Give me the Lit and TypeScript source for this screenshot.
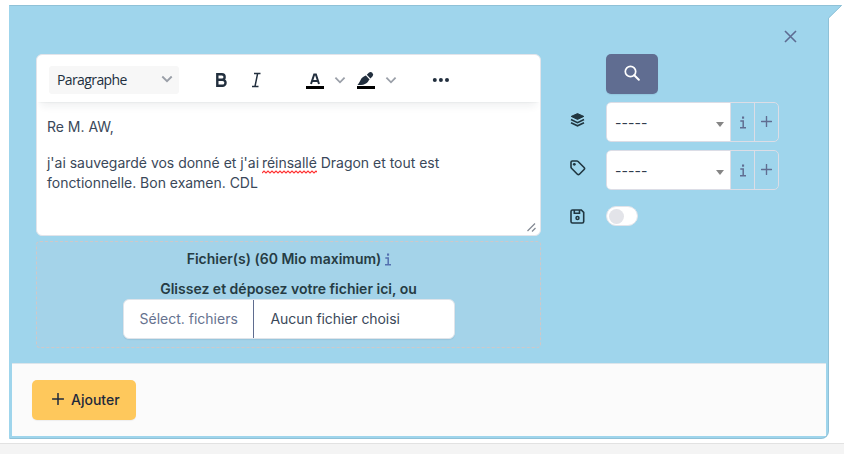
import { LitElement, html, css } from "lit";
import { customElement } from "lit/decorators.js";

const chevron = html`<svg width="12" height="8" viewBox="0 0 12 8"><path d="M1.300 1.500 6 6.200l4.700-4.700" fill="none" stroke="#9a9fa8" stroke-width="1.900"/></svg>`;
const infoIcon = html`<svg class="info" width="8" height="13" viewBox="0 0 8 13"><path d="M1.300 5h2.900v6.500M1 11.700h6" fill="none" stroke="currentColor" stroke-width="1.500"/><rect x="3" y="0.500" width="2.100" height="2.200" fill="currentColor"/></svg>`;
const plusIcon = (size: number) => html`<svg width=${size} height=${size} viewBox="0 0 12 12"><path d="M6 .5v11M.5 6h11" fill="none" stroke="currentColor" stroke-width="1.500" stroke-linecap="round"/></svg>`;

@customElement("app-root")
export class AppRoot extends LitElement {
  static styles = css`
    :host {
      display: flex;
      flex-direction: column;
      box-sizing: border-box;
      height: 454px;
      overflow: hidden;
      padding-top: 5px;
      background: #fff;
      font: 14px/20px Inter, sans-serif;
      color: #3a4859;
    }
    * { box-sizing: border-box; }
    svg { display: block; flex: none; }
    .card {
      position: relative;
      width: 820px;
      height: 434px;
      margin-left: 9px;
      background: #9fd5ec;
      border: 1px solid #8fc1d7;
      border-left-color: #9fd5ec;
      border-radius: 0 0 8px 0;
      display: flex;
      flex-direction: column;
      padding: 0 2px 2px;
    }
    .tail { position: absolute; left: 817px; top: -1px; }
    .close { position: absolute; left: 774px; top: 24px; }
    .body { height: 357px; display: flex; padding: 48px 0 0 24px; }
    .left { width: 505px; }
    .editor {
      position: relative;
      height: 182px;
      background: #fff;
      border: 1px solid #e2e4ea;
      border-radius: 6px;
      overflow: hidden;
    }
    .toolbar {
      height: 47px;
      display: flex;
      align-items: center;
      padding: 2px 12px 0;
      box-shadow: 0 2px 2px -2px rgba(34,47,62,.1), 0 8px 8px -4px rgba(34,47,62,.07);
    }
    .format {
      width: 130px;
      height: 28px;
      background: #f7f7f7;
      border-radius: 3px;
      display: flex;
      align-items: center;
      justify-content: space-between;
      padding: 0 6px 0 8px;
      font: 14px/18px "Open Sans", sans-serif;
      letter-spacing: -.6px;
      color: #222f3e;
    }
    .format span { padding-top: 1px; }
    .format svg { margin-bottom: 2px; }
    .content { padding: 15px 10px; letter-spacing: -.02px; }
    p { margin: 0 0 16px; }
    .typo { position: relative; display: inline-block; margin-left: -1px; }
    .wave { position: absolute; left: 0; top: 17px; }
    .grip { position: absolute; right: 4px; bottom: 3px; }
    .drop {
      height: 107px;
      margin-top: 5px;
      border: 1px dashed #d0c8c8;
      border-radius: 4px;
      background: #a4d3e9;
      display: flex;
      flex-direction: column;
      align-items: center;
      color: #263c44;
      font-weight: 600;
    }
    .line { display: flex; align-items: center; height: 20px; margin-top: 7px; }
    .line:first-child { padding-left: 2px; }
    .line + .line { margin-top: 10px; }
    .line .info { margin-left: 3px; color: #5470b0; }
    .file {
      width: 332px;
      height: 40px;
      display: flex;
      align-items: center;
      background: #fff;
      border: 1px solid #dfe4ea;
      border-radius: 6px;
      font-weight: 400;
      color: #3a4859;
      box-shadow: 0 1px 1px rgba(30,41,59,.08);
    }
    .pick { width: 130px; height: 38px; line-height: 38px; padding-left: 16px; border-right: 1px solid #5f6c8f; color: #66728f; }
    .none { padding-left: 17px; letter-spacing: -.08px; }
    .right {
      margin-left: 29px;
      display: grid;
      grid-template-columns: 36px auto;
      grid-template-rows: 40px 40px 40px 20px;
      row-gap: 8px;
      align-items: center;
      align-content: start;
    }
    .glyph { margin-bottom: 5px; }
    .save { margin: 16px 0 0; }
    .search {
      width: 52px;
      height: 40px;
      border-radius: 5px;
      background: #606d91;
      display: flex;
      padding: 11px 0 0 18px;
      box-shadow: 0 1px 1px rgba(30,41,59,.08);
    }
    .group { width: 173px; height: 40px; border: 1px solid #dcdde6; border-radius: 5px; display: flex; overflow: hidden; color: #606d91; }
    .select { width: 123px; background: #fff; display: flex; align-items: center; justify-content: space-between; padding: 0 6px 0 8px; color: #303c4d; }
    .dashes { margin-top: 1px; letter-spacing: .05px; }
    .caret { border: 4px solid transparent; border-top: 5px solid #858585; border-bottom: 0; margin-top: 4px; }
    .addon { width: 24px; border-left: 1px solid #dcdde6; display: flex; align-items: center; justify-content: center; }
    .addon:last-child { padding-bottom: 2px; }
    .toggle { width: 32px; height: 20px; margin-top: 16px; border-radius: 10px; background: #fff; border: 1px solid #e2e4ea; padding: 1.500px 2px; }
    .knob { width: 15px; height: 15px; border-radius: 50%; background: #e3e4e9; }
    .footer { flex: 1; background: #fbfbfb; border-top: 1px solid #dce5eb; padding: 16px 20px; }
    .add {
      width: 104px;
      height: 40px;
      background: #fec85c;
      border-radius: 5px;
      display: flex;
      align-items: center;
      padding-left: 20px;
      gap: 7px;
      font-weight: 500;
      color: #1e293b;
      box-shadow: 0 1px 1px rgba(30,41,59,.06);
    }
    .add svg { margin-bottom: 2px; }
    .page { height: 11px; margin-top: 4px; border-top: 1px solid #e2e2e2; background: #f4f4f4; }
  `;

  private group() {
    return html`<div class="group">
      <div class="select"><span class="dashes">-----</span><span class="caret"></span></div>
      <div class="addon">${infoIcon}</div>
      <div class="addon">${plusIcon(11)}</div>
    </div>`;
  }

  render() {
    const wave = "M0 3" + Array.from({ length: 14 }, (_, i) => `L${i * 4 + 2} 1L${i * 4 + 4} 3`).join("");
    return html`
      <div class="card">
        <svg class="tail" width="16" height="15" viewBox="0 0 16 15"><path d="M0 0H15L2 13V15H0Z" fill="#9fd5ec"/><path d="M0 .5H14.500L1.500 13V15" fill="none" stroke="#8fc1d7"/></svg>
        <svg class="close" width="13" height="13" viewBox="0 0 13 13"><path d="M1 1l11 11M12 1 1 12" stroke="#5d6c92" stroke-width="1.600"/></svg>
        <div class="body">
          <div class="left">
            <div class="editor">
              <div class="toolbar">
                <div class="format"><span>Paragraphe</span>${chevron}</div>
                <svg width="104" height="28" viewBox="179 65 104 28">
                  <path fill="none" stroke="#222f3e" stroke-width="2.400" d="M217.300 73.200h4.600a2.700 2.700 0 0 1 0 5.500h-4.600zM217.300 78.700h5.200a3 3 0 0 1 0 6.100h-5.200z"/>
                  <path fill="none" stroke="#222f3e" stroke-width="1.500" d="M254 72.600h6.500M252 85.400h6.500M257.600 72.600 255 85.400"/>
                </svg>
                <svg width="180" height="28" viewBox="283 65 180 28">
                  <path fill="#000" d="M306 85h18v3h-18zM357 85h18v3h-18z"/>
                  <path fill="none" stroke="#222f3e" stroke-width="2" d="M311 83 314.200 73.500h1.700L319 83M312.300 80h5.500"/>
                  <path fill="none" stroke="#9a9fa8" stroke-width="1.800" d="m335.400 76.700 4.600 4.600 4.600-4.600M386.400 76.700l4.600 4.600 4.600-4.600"/>
                  <path fill="#222f3e" d="m366.800 73.700 2-1.900a2.500 2.500 0 0 1 3.500 0l.1.100a2.500 2.500 0 0 1 0 3.500l-2 2.100zM365.900 74.600l3.700 3.800c-1.200 1.200-1.200 2.200-3.200 3.800-1.900 1.400-4.600 1.900-8.900 1.800 1.400-1.500 2.200-3.200 3.100-5 1.100-2.400 3-3.200 5.300-4.400z"/>
                  <circle cx="434.800" cy="79" r="2" fill="#222f3e"/><circle cx="440.900" cy="79" r="2" fill="#222f3e"/><circle cx="447" cy="79" r="2" fill="#222f3e"/>
                </svg>
              </div>
              <div class="content">
                <p>Re M. AW,</p>
                <p>j'ai sauvegardé vos donné et j'ai <span class="typo">réinsallé<svg class="wave" width="55" height="4" viewBox="0 0 55 4"><path d=${wave} fill="none" stroke="#f33" stroke-width="1.100"/></svg></span> Dragon et tout est<br>fonctionnelle. Bon examen. CDL</p>
              </div>
              <svg class="grip" width="9" height="9" viewBox="0 0 9 9"><path d="M.5 8 8 .5M5 8.500 8.500 5" stroke="#858b95" stroke-width="1.300"/></svg>
            </div>
            <div class="drop">
              <div class="line">Fichier(s) (60 Mio maximum) ${infoIcon}</div>
              <div class="line">Glissez et déposez votre fichier ici, ou</div>
              <div class="file"><span class="pick">Sélect. fichiers</span><span class="none">Aucun fichier choisi</span></div>
            </div>
          </div>
          <div class="right">
            <span></span>
            <div class="search"><svg width="16" height="16" viewBox="0 0 16 16"><circle cx="6.500" cy="6.500" r="5.200" fill="none" stroke="#fff" stroke-width="1.700"/><path d="m10.300 10.300 4.500 4.400" stroke="#fff" stroke-width="2" stroke-linecap="round"/></svg></div>
            <svg class="glyph" width="15" height="16" viewBox="0 0 15 16"><path d="M7.500 1.600 13.800 4.400 7.500 7.400 1.200 4.400z" fill="#203640" stroke="#203640" stroke-width="1" stroke-linejoin="round"/><path d="m1 7.500 6.500 3.100L14 7.500M1 10.700l6.500 3.100 6.500-3.100" fill="none" stroke="#203640" stroke-width="1.600"/></svg>
            ${this.group()}
            <svg class="glyph" width="16" height="16" viewBox="0 0 16 16"><path d="M1 2.300Q1 1 2.300 1h4.500q.8 0 1.300.5l6 6q1 1 0 2l-4.700 4.700q-1 1-2 0l-5.900-6Q1 7.700 1 7z" fill="none" stroke="#203640" stroke-width="1.600" stroke-linejoin="round"/><circle cx="4.300" cy="4.300" r="1.400" fill="#203640"/></svg>
            ${this.group()}
            <svg class="save" width="15" height="15" viewBox="0 0 15 15"><path d="M2.500 1h8.800L13.700 3.400V12.500q0 1.500-1.500 1.500H2.500Q1 14 1 12.500v-10Q1 1 2.500 1zM4.300 1v3.200h5.200V1" fill="none" stroke="#203640" stroke-width="1.600"/><circle cx="7.500" cy="9" r="1.500" fill="none" stroke="#203640" stroke-width="1.500"/></svg>
            <div class="toggle"><div class="knob"></div></div>
          </div>
        </div>
        <div class="footer"><div class="add">${plusIcon(12)}<span>Ajouter</span></div></div>
      </div>
      <div class="page"></div>
    `;
  }
}
